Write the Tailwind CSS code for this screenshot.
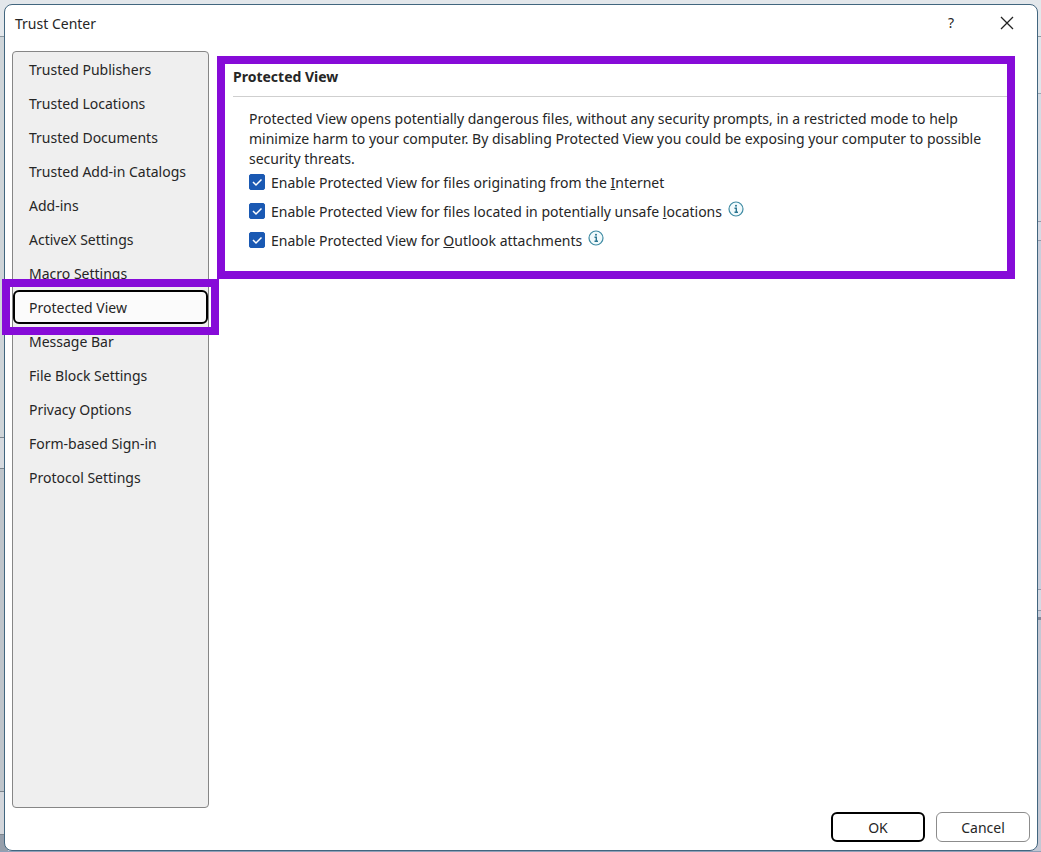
<!DOCTYPE html>
<html lang="en">
    <head>
        <meta charset="UTF-8">
        <meta name="viewport" content="width=device-width, initial-scale=1.0">
        <title>Trust Center</title>
        <script src="https://cdn.jsdelivr.net/npm/@tailwindcss/browser@4"></script>
    </head>
    <body class="relative flex min-h-screen overflow-hidden bg-[#c9cedb] pt-1 pr-[3px] pb-px pl-1 font-['Noto_Sans','Open_Sans',sans-serif] text-sm text-[#262626]">
        <!-- window behind the dialog -->
        <div aria-hidden="true" class="absolute inset-0 flex flex-col">
            <div class="h-9 bg-[#e3e7eb]"></div>
            <div class="flex flex-1 justify-between border-t border-[#8d979f]">
                <div class="flex w-2 flex-col">
                    <div class="h-[400px] bg-[#cfd5d9]"></div>
                    <div class="h-8 border-y border-[#7d868e] bg-[#d6dadf]"></div>
                    <div class="flex-1 bg-[#bfc5cb]"></div>
                    <div class="h-11 border-y border-[#7d868e] bg-[#d3d6db]"></div>
                    <div class="h-4 bg-[#969fab]"></div>
                </div>
                <div class="flex w-2 flex-col">
                    <div class="h-14 bg-[#dfe5ea]"></div>
                    <div class="h-32 border-t border-[#9aa5b1] bg-[#d5dbe3]"></div>
                    <div class="h-5 border-y border-[#9298a8] bg-[#d6dae4]"></div>
                    <div class="h-[348px] bg-[#c9cedb]"></div>
                    <div class="h-[22px] border-y border-[#9298a8] bg-[#d6dae4]"></div>
                    <div class="h-[9px] border-b-3 border-[#7f8798]"></div>
                    <div class="flex-1 bg-[#c4c8d4]"></div>
                </div>
            </div>
            <div class="h-px bg-[#8fa0b8]"></div>
        </div>

        <div role="dialog" aria-labelledby="title" class="relative flex flex-1 flex-col rounded-lg border border-[#42667f] bg-white">
            <header class="flex h-9 items-center justify-between pr-2 pl-[10px]">
                <h1 id="title" class="pt-0.5">Trust Center</h1>
                <div class="flex gap-3">
                    <button aria-label="Help" class="h-8 w-11">?</button>
                    <button aria-label="Close" class="grid h-8 w-11 place-items-center">
                        <svg width="14" height="14" viewBox="0 0 14 14" fill="none" stroke="#222" stroke-width="1.3"><path d="M1 1l12 12M13 1L1 13"/></svg>
                    </button>
                </div>
            </header>

            <div class="flex flex-1 gap-2 pt-[10px] pr-[22px] pl-[7px]">
                <nav class="w-[197px] shrink-0 rounded border border-[#868686] bg-[#efefef]">
                    <ul>
                        <li><a href="#" class="flex h-[34px] items-center px-4 pt-0.5">Trusted Publishers</a></li>
                        <li><a href="#" class="flex h-[34px] items-center px-4 pt-0.5">Trusted Locations</a></li>
                        <li><a href="#" class="flex h-[34px] items-center px-4 pt-0.5">Trusted Documents</a></li>
                        <li><a href="#" class="flex h-[34px] items-center px-4 pt-0.5">Trusted Add-in Catalogs</a></li>
                        <li><a href="#" class="flex h-[34px] items-center px-4 pt-0.5">Add-ins</a></li>
                        <li><a href="#" class="flex h-[34px] items-center px-4 pt-0.5">ActiveX Settings</a></li>
                        <li><a href="#" class="flex h-[34px] items-center px-4 pt-0.5">Macro Settings</a></li>
                        <li class="relative">
                            <a href="#" aria-current="page" class="flex h-[34px] items-center rounded-md border-2 border-black bg-[#fbfbfb] px-[14px] pt-0.5">Protected View</a>
                            <span class="pointer-events-none absolute -inset-x-[11px] -inset-y-[11px] border-8 border-[#860bd8]"></span>
                        </li>
                        <li><a href="#" class="flex h-[34px] items-center px-4 pt-0.5">Message Bar</a></li>
                        <li><a href="#" class="flex h-[34px] items-center px-4 pt-0.5">File Block Settings</a></li>
                        <li><a href="#" class="flex h-[34px] items-center px-4 pt-0.5">Privacy Options</a></li>
                        <li><a href="#" class="flex h-[34px] items-center px-4 pt-0.5">Form-based Sign-in</a></li>
                        <li><a href="#" class="flex h-[34px] items-center px-4 pt-0.5">Protocol Settings</a></li>
                    </ul>
                </nav>

                <main class="mt-[5px] h-[223px] min-w-0 flex-1 border-8 border-[#860bd8] pl-2">
                    <h2 class="border-b border-[#cfcfcf] pt-[3px] pb-[9px] font-bold">Protected View</h2>
                    <div class="pt-3 pl-4">
                        <p class="-mb-0.5 leading-5">Protected View opens potentially dangerous files, without any security prompts, in a restricted mode to help minimize harm to your computer. By disabling Protected View you could be exposing your computer to possible security threats.</p>
                        <div class="flex h-[29px] items-center">
                            <input type="checkbox" id="internet" checked class="peer size-4 appearance-none rounded-xs border border-[#777] checked:border-[#1a59b3] checked:bg-[#1a59b3]">
                            <svg class="pointer-events-none invisible -ml-4 size-4 peer-checked:visible" viewBox="0 0 16 16" fill="none" stroke="#fff" stroke-width="1.5"><path d="M4 8l3 3 5.500-5.500"/></svg>
                            <label for="internet" class="pt-0.5 pl-1.5">Enable Protected View for files originating from the <u>I</u>nternet</label>
                        </div>
                        <div class="flex h-[29px] items-center">
                            <input type="checkbox" id="unsafe" checked class="peer size-4 appearance-none rounded-xs border border-[#777] checked:border-[#1a59b3] checked:bg-[#1a59b3]">
                            <svg class="pointer-events-none invisible -ml-4 size-4 peer-checked:visible" viewBox="0 0 16 16" fill="none" stroke="#fff" stroke-width="1.5"><path d="M4 8l3 3 5.500-5.500"/></svg>
                            <label for="unsafe" class="pt-0.5 pl-1.5">Enable Protected View for files located in potentially unsafe <u>l</u>ocations</label>
                            <svg class="mb-1 ml-1.5 size-4" viewBox="0 0 16 16" fill="none"><circle cx="8" cy="8" r="7" fill="#f1fafc" stroke="#3f8ba3" stroke-width="1.2"/><circle cx="8" cy="4.800" r="1" fill="#2b7590"/><path d="M6.500 7.200H8.300V11.300M6.500 11.300H10" stroke="#2b7590" stroke-width="1.400"/></svg>
                        </div>
                        <div class="flex h-[29px] items-center">
                            <input type="checkbox" id="outlook" checked class="peer size-4 appearance-none rounded-xs border border-[#777] checked:border-[#1a59b3] checked:bg-[#1a59b3]">
                            <svg class="pointer-events-none invisible -ml-4 size-4 peer-checked:visible" viewBox="0 0 16 16" fill="none" stroke="#fff" stroke-width="1.5"><path d="M4 8l3 3 5.500-5.500"/></svg>
                            <label for="outlook" class="pt-0.5 pl-1.5">Enable Protected View for <u>O</u>utlook attachments</label>
                            <svg class="mb-1 ml-1.5 size-4" viewBox="0 0 16 16" fill="none"><circle cx="8" cy="8" r="7" fill="#f1fafc" stroke="#3f8ba3" stroke-width="1.2"/><circle cx="8" cy="4.800" r="1" fill="#2b7590"/><path d="M6.500 7.200H8.300V11.300M6.500 11.300H10" stroke="#2b7590" stroke-width="1.400"/></svg>
                        </div>
                    </div>
                </main>
            </div>

            <footer class="flex justify-end gap-[11px] pt-1 pr-[7px] pb-2">
                <button class="h-[30px] w-[94px] rounded-md border-2 border-black pt-0.5">OK</button>
                <button class="h-[30px] w-[94px] rounded-md border border-[#8c8c8c] pt-0.5">Cancel</button>
            </footer>
        </div>
    </body>
</html>
